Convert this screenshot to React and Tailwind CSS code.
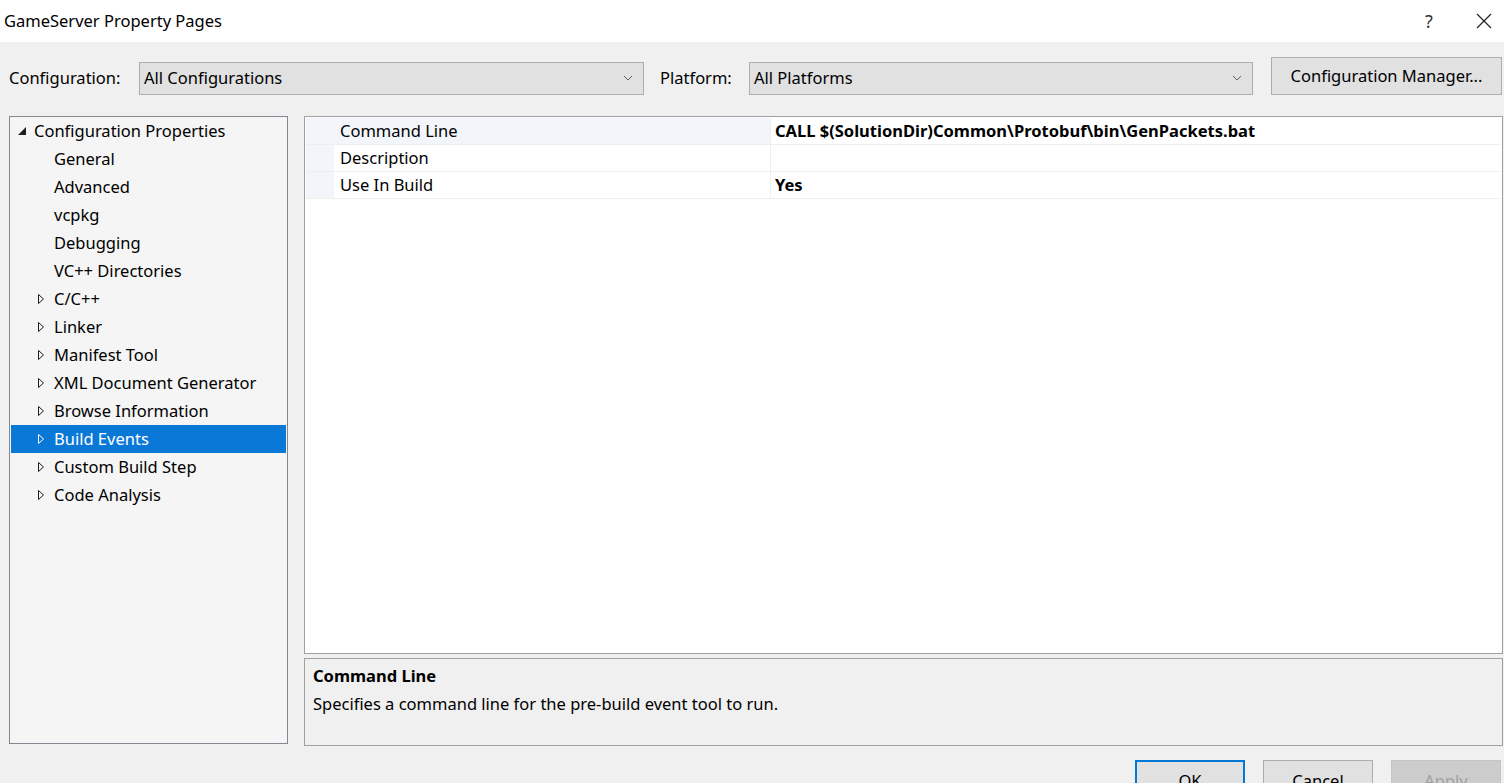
import { useState } from 'react'

const tree = [
  { label: 'General', arrow: false },
  { label: 'Advanced', arrow: false },
  { label: 'vcpkg', arrow: false },
  { label: 'Debugging', arrow: false },
  { label: 'VC++ Directories', arrow: false },
  { label: 'C/C++', arrow: true },
  { label: 'Linker', arrow: true },
  { label: 'Manifest Tool', arrow: true },
  { label: 'XML Document Generator', arrow: true },
  { label: 'Browse Information', arrow: true },
  { label: 'Build Events', arrow: true },
  { label: 'Custom Build Step', arrow: true },
  { label: 'Code Analysis', arrow: true },
]

const props = [
  { name: 'Command Line', value: 'CALL $(SolutionDir)Common\\Protobuf\\bin\\GenPackets.bat' },
  { name: 'Description', value: '' },
  { name: 'Use In Build', value: 'Yes' },
]

function Chevron() {
  return (
    <svg width="10" height="6" viewBox="0 0 10 6" className="shrink-0">
      <path d="M1 1l4 4 4-4" fill="none" stroke="#606060" strokeWidth="1" />
    </svg>
  )
}

function Arrow({ white }) {
  return (
    <svg width="8" height="12" viewBox="0 0 8 12" className="shrink-0">
      <path d="M1.5 1.5v9l5-4.5z" fill="none" stroke={white ? '#ffffff' : '#1e1e1e'} strokeWidth="1" />
    </svg>
  )
}

function Select({ value, width }) {
  return (
    <div className={`${width} h-[33px] bg-[#e1e1e1] border border-[#adadad] flex items-center justify-between pl-[4px] pr-[10px]`}>
      <span>{value}</span>
      <Chevron />
    </div>
  )
}

export default function App() {
  const [selected, setSelected] = useState('Build Events')
  const [row, setRow] = useState(0)

  return (
    <div className="w-[1504px] h-[783px] overflow-hidden bg-[#f0f0f0] text-[16.5px] text-black font-['Noto_Sans','Open_Sans',sans-serif] leading-none">
      {/* title bar */}
      <div className="h-[42px] bg-white flex items-center justify-between pl-[4px]">
        <span>GameServer Property Pages</span>
        <div className="flex items-center h-full">
          <span className="w-[70px] text-center text-[18px] text-[#333]">?</span>
          <div className="w-[40px] flex justify-center">
            <svg width="16" height="16" viewBox="0 0 16 16">
              <path d="M1 1l14 14M15 1L1 15" stroke="#222" strokeWidth="1.2" />
            </svg>
          </div>
        </div>
      </div>

      {/* config row */}
      <div className="flex items-center h-[74px] pl-[9px] pb-[2px]">
        <span className="w-[130px]">Configuration:</span>
        <Select value="All Configurations" width="w-[505px]" />
        <span className="ml-[16px] w-[89px]">Platform:</span>
        <Select value="All Platforms" width="w-[504px]" />
        <button className="ml-[18px] w-[231px] h-[38px] -mt-[4px] bg-[#e1e1e1] border border-[#adadad]">
          Configuration Manager...
        </button>
      </div>

      <div className="flex pl-[9px] gap-[16px]">
        {/* tree */}
        <div className="w-[279px] h-[628px] bg-[#f5f5f5] border border-[#828790] px-[1px]">
          <div className="h-[28px] flex items-center pl-[6px] gap-[7px]">
            <svg width="10" height="10" viewBox="0 0 10 10" className="shrink-0">
              <path d="M9 1v8H1z" fill="#1e1e1e" />
            </svg>
            <span>Configuration Properties</span>
          </div>
          {tree.map((t) => {
            const on = t.label === selected
            return (
              <div
                key={t.label}
                onClick={() => setSelected(t.label)}
                className={`h-[28px] flex items-center pl-[26px] ${on ? 'bg-[#0a78d7] text-white' : ''}`}
              >
                <span className="w-[17px]">{t.arrow && <Arrow white={on} />}</span>
                <span>{t.label}</span>
              </div>
            )
          })}
        </div>

        {/* right side */}
        <div className="w-[1199px] flex flex-col gap-[4px]">
          <div className="h-[538px] bg-white border border-[#a0a0a0] pt-[1px] px-[1px]">
            {props.map((p, i) => (
              <div key={p.name} onClick={() => setRow(i)} className="flex h-[27px] border-b border-[#eeeeee]">
                <div className="w-[28px] bg-[#f2f6fb]" />
                <div className={`w-[437px] flex items-center pl-[6px] border-r border-[#eeeeee] ${row === i ? 'bg-[#f2f6fb]' : ''}`}>
                  {p.name}
                </div>
                <div className="flex-1 flex items-center pl-[4px] font-bold">{p.value}</div>
              </div>
            ))}
          </div>
          <div className="h-[88px] bg-[#f0f0f0] border border-[#a0a0a0] pl-[8px] pt-[9px]">
            <div className="font-bold">{props[row].name}</div>
            <div className="mt-[11px]">Specifies a command line for the pre-build event tool to run.</div>
          </div>
        </div>
      </div>

      {/* buttons */}
      <div className="flex justify-end gap-[18px] pr-[3px] mt-[14px]">
        <button className="w-[110px] h-[34px] bg-[#e1e1e1] border-2 border-[#0078d7] pt-[8px]">OK</button>
        <button className="w-[110px] h-[34px] bg-[#e1e1e1] border border-[#adadad] pt-[8px]">Cancel</button>
        <button className="w-[110px] h-[34px] bg-[#cccccc] border border-dotted border-[#bfbfbf] text-[#a0a0a0] pt-[8px]">Apply</button>
      </div>
    </div>
  )
}
